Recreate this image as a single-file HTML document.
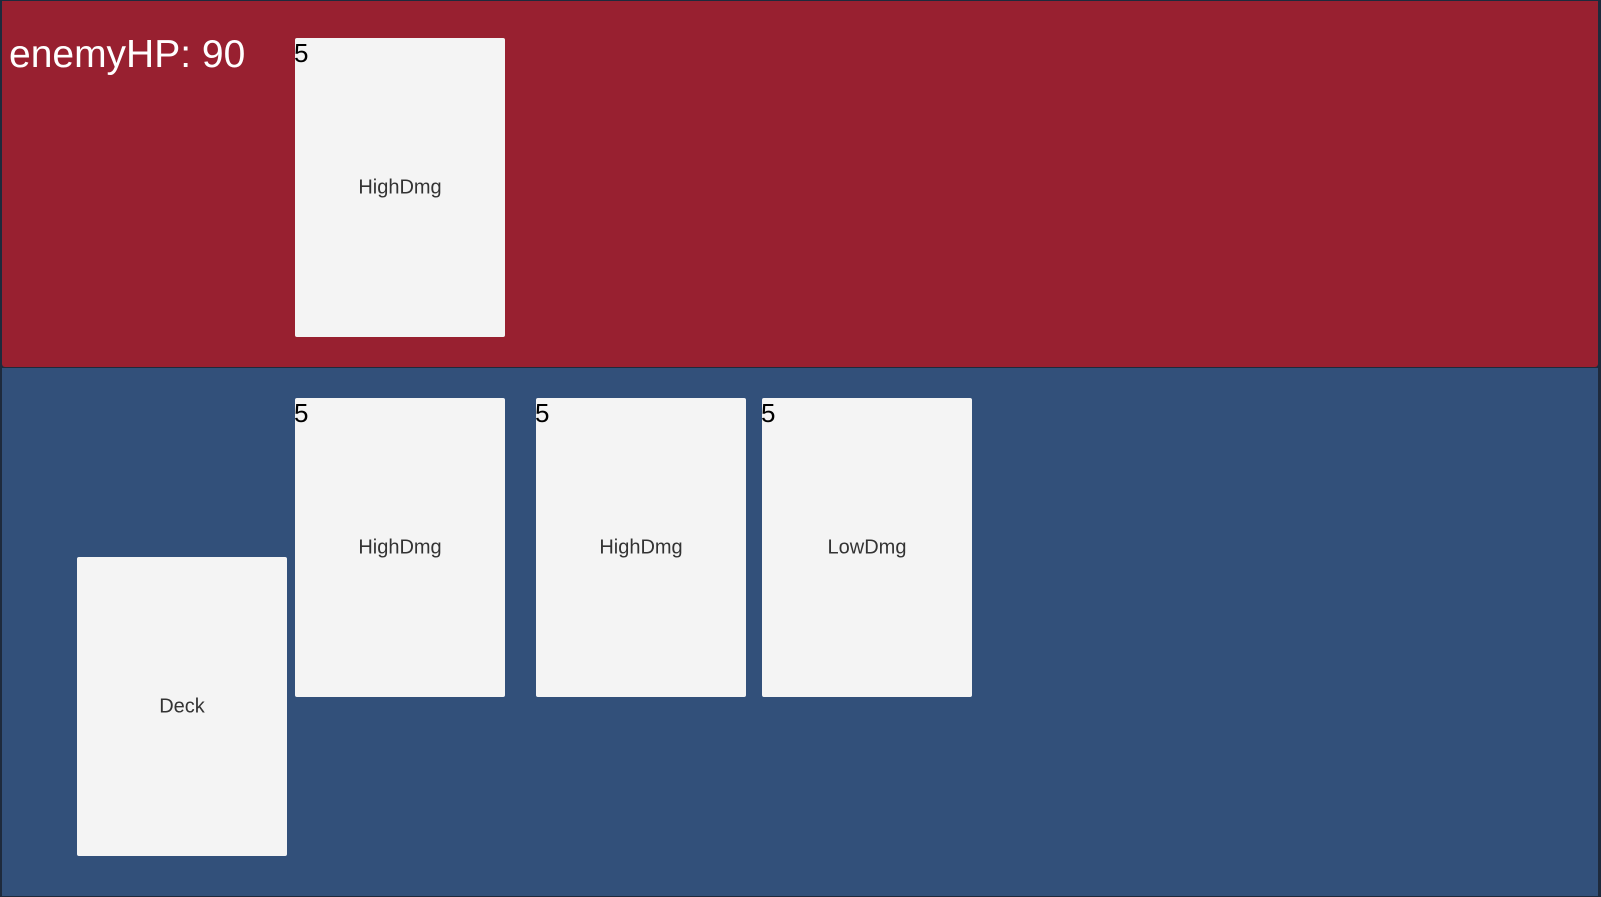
<!DOCTYPE html>
<html><head><style>
html,body{margin:0;padding:0;width:1601px;height:897px;background:#1e2a3c;overflow:hidden;font-family:"Liberation Sans",sans-serif}
.red{position:absolute;left:2px;top:1px;width:1596px;height:366px;background:#982030;border-radius:0 0 3px 3px}
.blue{position:absolute;left:2px;top:368px;width:1596px;height:528px;background:#32507a}
.card{position:absolute;width:210px;height:299px;background:#f4f4f4;border-radius:2px;color:#333;font-size:20px}
.card .l{position:absolute;left:0;right:0;top:50%;transform:translateY(-50%);text-align:center}
.card .n{position:absolute;left:-1px;top:1px;font-size:26px;color:#000;line-height:28px}
.hp{position:absolute;left:9px;top:32px;font-size:39px;color:#fff;line-height:46px}
</style></head><body>
<div class="red"></div>
<div class="blue"></div>
<div class="hp">enemyHP: 90</div>
<div class="card" style="left:295px;top:38px"><div class="n">5</div><div class="l">HighDmg</div></div>
<div class="card" style="left:295px;top:398px"><div class="n">5</div><div class="l">HighDmg</div></div>
<div class="card" style="left:536px;top:398px"><div class="n">5</div><div class="l">HighDmg</div></div>
<div class="card" style="left:762px;top:398px"><div class="n">5</div><div class="l">LowDmg</div></div>
<div class="card" style="left:77px;top:557px"><div class="l">Deck</div></div>
</body></html>
